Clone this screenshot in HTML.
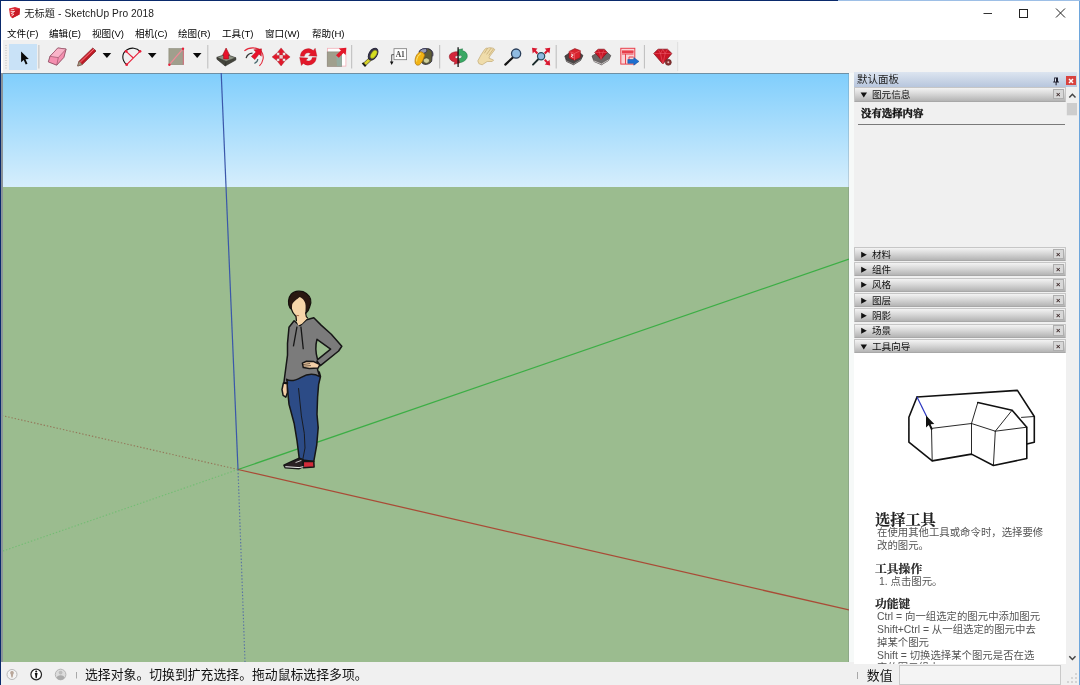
<!DOCTYPE html>
<html lang="zh-CN">
<head>
<meta charset="utf-8">
<title>无标题 - SketchUp Pro 2018</title>
<style>
*{box-sizing:border-box;margin:0;padding:0}
html,body{width:1080px;height:685px;overflow:hidden;background:#fff}
body{position:relative;will-change:transform;font-family:"Liberation Sans","Noto Sans CJK SC",sans-serif;color:#000}
.abs{position:absolute}
#topl{left:0;top:0;width:838px;height:1.3px;background:#0a2a6c}
#topr{left:838px;top:0;width:242px;height:1.3px;background:#9dbfe6}
#rightb{left:1078.6px;top:1px;width:1.4px;height:684px;background:#6ea6dc;z-index:5}
#leftb{left:0;top:1px;width:1.3px;height:684px;background:#0a2a6c}
#title{left:24.3px;top:6.5px;font-size:10.2px;line-height:14px;white-space:nowrap;color:#1c1c1c;letter-spacing:0.08px}
.menu{top:26.6px;font-size:9.6px;line-height:14px;white-space:nowrap}
#toolbar{left:2.8px;top:40.3px;width:1077px;height:32.7px;background:#f0f0f0}
#tbend{left:678px;top:40px;width:402px;height:33px;background:#f3f3f3}
#selbtn{left:9.4px;top:43.5px;width:27.4px;height:26.2px;background:#c9e2f7}
.sep{width:1px;background:#c4c4c4;top:45px;height:23px}
#vp{left:2px;top:73px;width:847px;height:589.4px}
#vpl{left:1px;top:73px;width:1.5px;height:589.4px;background:#8c949a;z-index:2}
#gap{left:848.6px;top:72.5px;width:5.4px;height:590px;background:#f6f9f8}
#panel{left:854px;top:73px;width:226px;height:589px;background:#f0f0f0}
#ptitle{left:854px;top:72.3px;width:223.4px;height:14.7px;background:linear-gradient(#dde5f0,#b7c6dd);font-size:10.5px;line-height:14px;padding-left:3px;color:#222}
.sec{left:854px;width:211.6px;height:14px;background:linear-gradient(#f3f3f3 0%,#d8d8d8 45%,#b4b4b4 100%);border:1px solid #c6c6c6;border-bottom-color:#a8a8a8;border-radius:1px;font-size:9.6px;line-height:12px;color:#111;white-space:nowrap}
.sec .tri{position:absolute;left:5px;top:2.5px}
.sec .lbl{position:absolute;left:17px;top:0.6px}
.sec .x{position:absolute;right:1px;top:0.8px;width:10.6px;height:10.4px;border:1px solid #aeaeae;background:#d8d8d8;font-size:7.5px;font-weight:bold;line-height:9px;text-align:center;color:#3a2626}
#info{left:854px;top:102px;width:212px;height:144px;background:#f0f0f0}
#instr{left:854px;top:352px;width:212.3px;height:312.3px;background:#fff;overflow:hidden}
#sbar{left:1066px;top:87px;width:14px;height:577px;background:#f0f0f0}
#status{left:1px;top:662.4px;width:853px;height:22.6px;background:#f0f0f0}
#status2{left:854px;top:664px;width:226px;height:21px;background:#f0f0f0}
.h{-webkit-text-stroke:0.2px #2a2a2a;position:absolute;font-family:"Liberation Serif","Noto Serif CJK SC",serif;font-weight:bold;color:#222;white-space:nowrap}
.t{position:absolute;font-size:10.4px;line-height:12.4px;color:#555;white-space:nowrap}
</style>
</head>
<body>
<div class="abs" id="topl"></div><div class="abs" id="topr"></div>
<div class="abs" id="leftb"></div>
<div class="abs" id="rightb"></div>

<!-- title bar -->
<svg class="abs" style="left:8px;top:6px" width="13" height="13" viewBox="8 6 13 13">
<path d="M9 8.400 L15 7.100 L19.900 8.600 L19.500 14.600 L12.200 18.300 L10.100 16 Z" fill="#dc2a34"/>
<path d="M15.300 10.200 L19.900 8.600 L19.500 14.600 L12.200 18.300 L13.200 13 Z" fill="#c81a26"/>
<path d="M10.800 9.800 L14.200 9.400 M10.600 11.600 L14.600 11.500 L11.200 13.600 L14 14.300 L11.600 15.800" fill="none" stroke="#fbdada" stroke-width="0.900"/>
</svg>
<div class="abs" id="title">无标题 - SketchUp Pro 2018</div>
<svg class="abs" style="left:975px;top:2.6px" width="100" height="20" viewBox="0 0 100 20">
<path d="M8.5 10.5 H17" stroke="#333" stroke-width="1" fill="none"/>
<rect x="44.5" y="6.500" width="8" height="8" stroke="#222" stroke-width="1" fill="none"/>
<path d="M81 5.500 L90 14.500 M90 5.500 L81 14.500" stroke="#222" stroke-width="1" fill="none"/>
</svg>

<!-- menu -->
<div class="abs menu" style="left:7px">文件(F)</div>
<div class="abs menu" style="left:49px">编辑(E)</div>
<div class="abs menu" style="left:92px">视图(V)</div>
<div class="abs menu" style="left:135px">相机(C)</div>
<div class="abs menu" style="left:178px">绘图(R)</div>
<div class="abs menu" style="left:222px">工具(T)</div>
<div class="abs menu" style="left:265px">窗口(W)</div>
<div class="abs menu" style="left:312px">帮助(H)</div>

<!-- toolbar -->
<div class="abs" id="toolbar"></div>
<div class="abs" id="tbend"></div>
<div class="abs" id="selbtn"></div>
<!--TOOLBAR-ICONS-->
<svg class="abs" style="left:1px;top:40px" width="700" height="33" viewBox="1 40 700 33">
<path d="M6 45 V69" stroke="#b9b9b9" stroke-width="1" stroke-dasharray="1 1.500"/>
<path d="M38.9 45 V68.500" stroke="#bcbcbc" stroke-width="1"/>
<path d="M207.8 45 V68.500" stroke="#bcbcbc" stroke-width="1"/>
<path d="M351.7 45 V68.500" stroke="#bcbcbc" stroke-width="1"/>
<path d="M439.7 45 V68.500" stroke="#bcbcbc" stroke-width="1"/>
<path d="M556.2 45 V68.500" stroke="#bcbcbc" stroke-width="1"/>
<path d="M644.4 45 V68.500" stroke="#bcbcbc" stroke-width="1"/>
<path d="M677.700 42 V71" stroke="#dedede" stroke-width="1"/>
<path d="M21.100 51.500 L21.100 62.300 L23.700 60 L25.700 64.600 L27.500 63.800 L25.500 59.300 L28.800 59.100 Z" fill="#0a0a0a"/>
<path d="M57.800 48 L66.100 49.100 L63.900 57.400 L56.700 65.200 L48.300 61.900 L50 56.300 Z" fill="#f58fb0" stroke="#8d4c60" stroke-width="0.900" stroke-linejoin="round"/>
<path d="M57.800 48 L66.100 49.100 L58.300 57.600 L50 56.300 Z" fill="#f9b4c9" stroke="#8d4c60" stroke-width="0.600" stroke-linejoin="round"/>
<path d="M58.300 57.600 L56.700 65.200" stroke="#8d4c60" stroke-width="0.600"/>
<path d="M77.700 66 L79 61.300 L92.800 48 L96 51 L82.300 64.500 Z" fill="#cf1f2b" stroke="#7a1a20" stroke-width="0.700" stroke-linejoin="round"/>
<path d="M77.700 66 L79 61.300 L82.300 64.500 Z" fill="#a09a80" stroke="#6a6450" stroke-width="0.500"/>
<path d="M80.200 62.200 L94 49" stroke="#f0808a" stroke-width="0.900"/>
<path d="M81.600 63.600 L95.300 50.300" stroke="#9a1820" stroke-width="0.700"/>
<path d="M102.6 53 h8.600 l-4.300 5 Z" fill="#0a0a0a"/>
<path d="M147.9 53 h8.600 l-4.300 5 Z" fill="#0a0a0a"/>
<path d="M192.9 53 h8.600 l-4.300 5 Z" fill="#0a0a0a"/>
<path d="M126.700 64.700 C121.500 60 121.500 53.500 126.700 50 C131 47 137 47.800 140 51.300" fill="none" stroke="#111" stroke-width="1.100"/>
<path d="M126.700 64.700 L140 51.300 M126.100 51.300 L133.300 58" stroke="#e8203a" stroke-width="1.100" fill="none"/>
<circle cx="126.7" cy="64.7" r="1.400" fill="#e8203a"/>
<circle cx="140.0" cy="51.3" r="1.400" fill="#e8203a"/>
<circle cx="126.1" cy="51.3" r="1.400" fill="#e8203a"/>
<rect x="168.900" y="48.600" width="14.400" height="16.100" fill="#a09f8d" stroke="#8a8a7a" stroke-width="0.600"/>
<path d="M169.300 64.700 L183 48.800" stroke="#f08a98" stroke-width="1.200"/>
<path d="M183.300 48.600 V64.700" stroke="#e8506a" stroke-width="0.700"/>
<circle cx="169.400" cy="64.700" r="1.200" fill="#e8203a"/><circle cx="183" cy="48.800" r="1.200" fill="#e8203a"/>
<path d="M216.900 57.300 L216.900 59.200 L225.200 66 L235.800 60 L235.800 57.800 L226.100 61.200 Z" fill="#45453c" stroke="#2a2a26" stroke-width="0.600" stroke-linejoin="round"/>
<path d="M216.900 57.300 L226.100 54.300 L235.800 57.800 L226.100 61.400 Z" fill="#8e9484" stroke="#3a3a34" stroke-width="0.700" stroke-linejoin="round"/>
<path d="M226.100 61.400 L225.200 66" stroke="#2a2a26" stroke-width="0.600"/>
<path d="M226.100 48 L229.500 55 L228.600 55 L228.600 58.900 L223.600 58.900 L223.600 55 L222.700 55 Z" fill="#e8122a" stroke="#9a1018" stroke-width="0.600" stroke-linejoin="round"/>
<path d="M244.400 50.900 C249 46.800 257.500 46.500 261.700 52 C264.500 56 263.300 62 259.400 65.900" fill="none" stroke="#e3283a" stroke-width="1.100"/>
<path d="M246.100 58.100 C247 55 249.500 53.200 252.500 53.100" fill="none" stroke="#333" stroke-width="1.200"/>
<path d="M254.400 63.400 C256.500 62.500 257.800 61 257.800 59" fill="none" stroke="#4a6a70" stroke-width="1.200"/>
<path d="M261.500 48.800 L261.300 56.200 L259 54.200 L254.800 59.600 L251.300 56.400 L256 52 L253.800 49.800 Z" fill="#e8122a" stroke="#9a1018" stroke-width="0.400"/>
<path transform="rotate(0 281.1 56.9)" d="M281.1 47.9 l3.700 4.600 h-2.200 v2.600 h-3 v-2.600 h-2.200 Z" fill="#e3182a" stroke="#a01420" stroke-width="0.400"/>
<path transform="rotate(90 281.1 56.9)" d="M281.1 47.9 l3.700 4.600 h-2.200 v2.600 h-3 v-2.600 h-2.200 Z" fill="#e3182a" stroke="#a01420" stroke-width="0.400"/>
<path transform="rotate(180 281.1 56.9)" d="M281.1 47.9 l3.700 4.600 h-2.200 v2.600 h-3 v-2.600 h-2.200 Z" fill="#e3182a" stroke="#a01420" stroke-width="0.400"/>
<path transform="rotate(270 281.1 56.9)" d="M281.1 47.9 l3.700 4.600 h-2.200 v2.600 h-3 v-2.600 h-2.200 Z" fill="#e3182a" stroke="#a01420" stroke-width="0.400"/>
<circle cx="281.1" cy="56.9" r="1.300" fill="#f4c8c8"/>
<path d="M300.300 56.300 A8 8 0 0 1 313.300 50.400 L315.200 48.200 L317 56.300 L308.600 55.800 L310.600 53.500 A4 4 0 0 0 304.300 56.300 Z" fill="#e3182a" stroke="#a01420" stroke-width="0.300"/>
<path d="M316.300 57.500 A8 8 0 0 1 303.300 63.400 L301.400 65.600 L299.600 57.500 L308 58 L306 60.300 A4 4 0 0 0 312.300 57.500 Z" fill="#e3182a" stroke="#a01420" stroke-width="0.300"/>
<rect x="327.500" y="48.300" width="18.400" height="17.800" fill="#fff" stroke="#f3b0b8" stroke-width="0.800"/>
<rect x="327.200" y="51.900" width="14.500" height="14.400" fill="#a09f8d" stroke="#85857a" stroke-width="0.600"/>
<path d="M336.300 56 L341.700 56 L341.700 66.300 L337 66.300 Z" fill="#8fb0a8" opacity="0.700"/>
<path d="M346.300 47.800 L345.700 55 L343.400 52.900 L338.800 57.800 L336 55.200 L340.900 50.500 L338.800 48.500 Z" fill="#e3182a"/>
<path d="M363 63.600 L369.600 57.400 L371.800 59.800 L365.200 66 Z" fill="#d8d428" stroke="#3a3a20" stroke-width="0.700" stroke-linejoin="round"/>
<path d="M362.500 62.900 L365.700 66.300" stroke="#1e1e18" stroke-width="2"/>
<ellipse cx="373.100" cy="54.100" rx="4" ry="6.500" transform="rotate(33 373.100 54.100)" fill="#3a3848" stroke="#26243a" stroke-width="1"/>
<ellipse cx="373.700" cy="54.300" rx="2.500" ry="4.600" transform="rotate(33 373.700 54.300)" fill="#d4de22" stroke="#7a7a28" stroke-width="0.500"/>
<rect x="394" y="48.700" width="12.600" height="11" fill="#fff" stroke="#7a7a7a" stroke-width="0.800"/>
<text x="400.300" y="57.200" font-family="Liberation Serif,serif" font-weight="bold" font-size="7.500" text-anchor="middle" fill="#444">A1</text>
<path d="M394 54.700 H391.700 V62" stroke="#333" stroke-width="0.800" fill="none"/>
<path d="M389.900 61.500 h3.600 l-1.800 3.600 Z" fill="#111"/>
<path d="M419.200 51.600 L421.700 62.500 C423 64.600 426 65 428.500 63.800 C430.800 62.800 432 61.500 431.800 60 L432.300 53 C431.500 50 429.500 48.600 427.300 48.500 C423.500 48.300 420.300 49.500 419.200 51.600 Z" fill="#5f5d36" stroke="#26243a" stroke-width="0.800" stroke-linejoin="round"/>
<ellipse cx="426.400" cy="60.600" rx="3.100" ry="2.700" fill="#cfd09c" stroke="#3a3a2a" stroke-width="0.600"/>
<path d="M428.600 49.300 C431.800 49.300 433.600 52.500 432.700 56.300" fill="none" stroke="#26243a" stroke-width="0.900"/>
<ellipse cx="423.200" cy="51.100" rx="3.900" ry="2.300" transform="rotate(-18 423.200 51.100)" fill="#969cb2" stroke="#26244a" stroke-width="0.700"/>
<path d="M420.300 51.800 C416.600 53.500 414.700 58 415.100 62 C415.400 64.900 417.500 65.900 419.500 64.700 C422 63.100 423.600 59 424.600 55.300 C424.300 53.300 422.500 51.800 420.300 51.800 Z" fill="#f2b414" stroke="#a8700c" stroke-width="0.700" stroke-linejoin="round"/>
<path d="M416.600 61.500 C416.500 58 418.200 55 421 53.600" fill="none" stroke="#fbe27a" stroke-width="1"/>
<path d="M458.100 49.800 L462.600 48.800 L462.200 50.600 C465.500 51.300 467.500 53.500 467.300 56.200 C467.100 59.500 464 62 459.300 62.700 L459.300 58.600 C461 58.300 461.800 57.600 461.800 56.600 C461.800 55.700 461.200 55.200 460.300 54.900 L460 56.300 L458.100 53.600 Z" fill="#3aa864" stroke="#1f7040" stroke-width="0.500" stroke-linejoin="round"/>
<path d="M458.100 51.800 C452 51.500 449 54 449.300 57.200 C449.600 59.800 452 61.400 454.800 62.100 L454.200 64.300 L459.800 62.800 L458.100 57.400 L456.800 58.600 C455.600 58.200 455 57.600 455 56.900 C455 56.200 456.200 55.800 458.100 55.800 Z" fill="#d4263a" stroke="#8a1420" stroke-width="0.500" stroke-linejoin="round"/>
<path d="M458.100 47.300 V67" stroke="#141414" stroke-width="1.300"/>
<path d="M477.800 60.900 L481.100 54.800 L484.400 49.800 C485.500 48.300 486.500 47.900 487.600 48.200 C489 47.600 490.200 47.500 491.300 47.900 C493 47.900 494.300 48.600 494.700 49.800 L490 55.900 L488.900 58.100 L493.600 60.100 L492.200 61.500 L487.200 61.500 L482.200 64.800 L478.900 63.700 Z" fill="#efdcaa" stroke="#c2a972" stroke-width="0.700" stroke-linejoin="round"/>
<path d="M487.600 48.200 L484.300 53.300 M491.300 47.900 L486.600 54.400 M493.600 48.700 L488.800 55.400" fill="none" stroke="#b89c68" stroke-width="0.600"/>
<path d="M512.600 57.800 L505.300 64.600" stroke="#151515" stroke-width="2.200" stroke-linecap="round"/>
<circle cx="516.100" cy="53.600" r="4.600" fill="#8fbbe2" stroke="#2a3f5a" stroke-width="1.300"/>
<path d="M538.500 59 L533 64.600" stroke="#1a2a2a" stroke-width="1.900" stroke-linecap="round"/>
<circle cx="541.100" cy="56.300" r="3.600" fill="#8fbbe2" stroke="#2a4a5a" stroke-width="1.200"/>
<path d="M532 47.800 L537.500 48.600 L535.800 50.300 L538.200 52.700 L536.700 54.200 L534.300 51.800 L532.700 53.400 Z" fill="#d81830"/>
<path d="M550.200 47.800 L544.700 48.600 L546.400 50.300 L544 52.700 L545.500 54.200 L547.900 51.800 L549.500 53.400 Z" fill="#d81830"/>
<path d="M550.200 65.400 L544.700 64.600 L546.400 62.900 L544 60.500 L545.500 59 L547.900 61.400 L549.500 59.800 Z" fill="#d81830"/>
<path d="M564.800 56 L570 52.500 L579 52 L583 55.500 L580.500 60.500 L573.500 64.800 L566.500 61.500 Z" fill="#4a4646" stroke="#2a2626" stroke-width="0.600" stroke-linejoin="round"/>
<path d="M566 60.800 L573.500 64 L580.800 59.800" fill="none" stroke="#9a9494" stroke-width="0.800"/>
<path d="M569 51.500 L574.800 48.600 L580.300 50.600 L580.300 57.500 L574.500 60.300 L569 58 Z" fill="#d8232e" stroke="#8a1018" stroke-width="0.600" stroke-linejoin="round"/>
<path d="M569 51.500 L574.500 53.500 L580.300 50.600 M574.500 53.500 L574.500 60.300" fill="none" stroke="#f07a80" stroke-width="0.500"/>
<path d="M571 54 L573.300 55 L571 56.300 L573.300 57.500" fill="none" stroke="#fff" stroke-width="0.800"/>
<path d="M592 56 L598 52.500 L607 52.300 L610.800 55.500 L608.500 60.500 L601.500 64.800 L594 61.500 Z" fill="#6a6666" stroke="#3a3636" stroke-width="0.600" stroke-linejoin="round"/>
<path d="M593.500 60.800 L601.500 64 L608.800 59.800" fill="none" stroke="#d0cccc" stroke-width="0.900"/>
<path d="M594.700 52.500 L598 49.200 L604.500 49.200 L607.300 52.500 L601 59.500 Z" fill="#c81424" stroke="#7a0c14" stroke-width="0.600" stroke-linejoin="round"/>
<path d="M594.700 52.500 H607.300 M598 49.200 L599.500 52.500 L601 59.500 L602.800 52.500 L604.500 49.200" fill="none" stroke="#f06a74" stroke-width="0.450"/>
<rect x="620.800" y="48.300" width="14" height="15.800" fill="#f9d5d8" stroke="#e8404c" stroke-width="1"/>
<path d="M622 51 H633.500 M622 54 H633.500 M625.500 54 V64 M629 57 H633.500 M629 57 V61" stroke="#e8404c" stroke-width="1" fill="none"/>
<rect x="622" y="50.800" width="11.500" height="2.300" fill="#e8404c"/>
<path d="M627.800 59.500 H633.800 V57.600 L639 61.400 L633.800 65.200 V63.300 H627.800 Z" fill="#1e6fd0" stroke="#0e4a98" stroke-width="0.500"/>
<path d="M653.700 53.500 L658 49.200 L667.500 49.200 L671.900 53.500 L662.800 64 Z" fill="#c81424" stroke="#7a0c14" stroke-width="0.700" stroke-linejoin="round"/>
<path d="M653.700 53.500 H671.900 M658 49.200 L660.500 53.500 L662.800 64 L665.200 53.500 L667.500 49.200 M660.500 53.500 L662.800 49.200 L665.200 53.500" fill="none" stroke="#f06070" stroke-width="0.500"/>
<circle cx="668.300" cy="62.300" r="3" fill="#8a3030" stroke="#5a2020" stroke-width="0.600"/><circle cx="668.300" cy="62.300" r="1" fill="#e8c0c0"/>
</svg>
<!--/TOOLBAR-ICONS-->

<!-- viewport -->
<div class="abs" id="vpl"></div>
<svg class="abs" id="vp" viewBox="2 73 847 589.4" width="847" height="589.4">
<defs>
<linearGradient id="sky" x1="0" y1="0" x2="0" y2="1">
<stop offset="0" stop-color="#80cefc"/>
<stop offset="1" stop-color="#d6eefc"/>
</linearGradient>
</defs>
<rect x="2" y="73" width="847" height="114" fill="url(#sky)"/>
<rect x="2" y="187" width="847" height="476" fill="#9bbc8f"/>
<rect x="2" y="72.700" width="847" height="1.200" fill="#6c8a9b"/>
<!--SCENE-->
<path d="M238 469.5 L3 415.8" stroke="#94785a" stroke-width="1.15" stroke-dasharray="1.4 1.9" fill="none"/>
<path d="M238 469.5 L3 551" stroke="#74bd74" stroke-width="1.15" stroke-dasharray="1.4 1.9" fill="none"/>
<path d="M238 469.5 L245 662" stroke="#5872a4" stroke-width="1.15" stroke-dasharray="1.4 1.9" fill="none"/>
<path d="M238 469.5 L849 259.2" stroke="#3cae45" stroke-width="1.25" fill="none"/>
<path d="M238 469.5 L849 610" stroke="#a94b36" stroke-width="1.25" fill="none"/>
<path d="M221.2 73 L238 469.5" stroke="#3a57aa" stroke-width="1.2" fill="none"/>
<path d="M 286.4 378.6 L 289.0 404.2 L 294.1 423.2 L 297.0 440.7 L 299.2 458.2 L 302.8 460.0 L 313.8 461.4 L 316.7 445.1 L 318.2 427.6 L 317.0 414.4 L 317.6 396.9 L 318.6 384.6 L 320.5 376.5 L 319.3 372.1 L 287.5 372.1 Z" fill="#2c4b86" stroke="#161616" stroke-width="1.5" stroke-linejoin="round"/>
<path d="M 298.5 388.1 L 301.4 415.9 L 304.3 433.4 L 305.0 448.0 L 302.8 459.4" fill="none" stroke="#161616" stroke-width="0.9"/>
<path d="M 283.9 465.2 L 291.9 461.4 L 299.2 458.2 L 303.3 460.0 L 303.3 466.7 L 299.2 468.7 L 285.3 467.8 Z" fill="#2a2024" stroke="#161616" stroke-width="1.5" stroke-linejoin="round"/>
<path d="M 303.3 461.4 L 313.8 461.4 L 314.1 467.0 L 303.3 467.8 Z" fill="#d22c3a" stroke="#161616" stroke-width="1.5" stroke-linejoin="round"/>
<path d="M 285.3 466.7 L 299.2 467.6 L 303.3 466.7" fill="none" stroke="#f2f2f2" stroke-width="1"/>
<path d="M 295.5 462.6 L 301.4 460.4" fill="none" stroke="#e8e8e8" stroke-width="0.8"/>
<path d="M 283.4 383.0 L 282.0 389.6 L 283.1 395.4 L 285.8 397.2 L 287.5 392.5 L 287.2 383.8 Z" fill="#f3cfa6" stroke="#161616" stroke-width="1.5" stroke-linejoin="round"/>
<path d="M 294.1 320.8 L 289.0 327.3 L 287.5 343.4 L 287.5 355.1 L 283.9 382.5 L 287.5 383.1 L 286.6 379.3 C 290.4 381.9 294.8 380.8 301.2 377.3 C 306.5 374.3 313.8 373.2 319.8 376.7 L 317.6 369.7 L 317.0 360.9 L 320.4 365.6 L 338.6 351.0 L 341.8 346.3 L 331.3 334.3 L 321.1 325.1 L 313.8 317.8 L 306.5 319.7 L 299.9 325.6 Z" fill="#7b7b7b" stroke="#161616" stroke-width="1.5" stroke-linejoin="round"/>
<path d="M 317.0 339.3 L 330.6 349.2 L 317.6 359.7 C 315.3 352.2 315.5 344.9 317.0 339.3 Z" fill="#9bbc8f" stroke="#161616" stroke-width="1.5" stroke-linejoin="round"/>
<path d="M 297.0 326.6 L 293.4 346.3 M 300.9 326.6 L 303.3 349.2" fill="none" stroke="#161616" stroke-width="1.3"/>
<path d="M 302.4 363.1 L 306.5 361.2 L 313.8 361.6 L 319.9 364.6 L 318.2 367.9 L 309.4 368.5 L 303.3 367.5 Z" fill="#f3cfa6" stroke="#161616" stroke-width="1.5" stroke-linejoin="round"/>
<path d="M 303.0 364.6 L 310.1 363.5 M 303.3 366.2 L 310.9 365.6" fill="none" stroke="#3a2a20" stroke-width="0.7"/>
<path d="M 295.4 315.6 L 296.3 320.5 L 298.3 325.4 L 302.0 323.8 L 307.5 318.0 L 306.1 316.5 L 305.5 312.3 Z" fill="#f6d5a8"/>
<path d="M 290.0 307.9 C 287.8 304.1 287.8 298.1 291.2 294.2 C 294.5 290.5 302.0 290.1 306.4 293.5 C 311.0 297.0 311.7 302.2 309.7 306.8 C 309.0 309.4 307.7 311.4 306.0 313.1 L 305.0 304.7 L 299.7 297.2 L 293.1 303.4 L 292.2 309.4 Z" fill="#2a1811" stroke="#14100c" stroke-width="1.2" stroke-linejoin="round"/>
<path d="M 292.1 304.7 C 293.1 302.0 297.2 299.1 299.7 297.1 C 302.5 298.1 305.4 301.4 305.6 305.4 C 305.7 308.7 305.6 311.3 305.0 313.4 C 303.7 315.4 301.0 316.7 298.4 316.1 C 295.8 315.6 293.1 312.6 291.9 308.8 Z" fill="#f6d5a8"/>
<path d="M 290.9 308.1 C 292.0 311.4 293.9 314.7 296.0 316.5 L 296.4 320.5" fill="none" stroke="#14100c" stroke-width="1.3" stroke-linecap="round"/>
<path d="M 305.6 312.9 L 306.3 316.7 L 307.6 317.9" fill="none" stroke="#14100c" stroke-width="1.1" stroke-linecap="round"/>
<path d="M 296.2 315.4 L 299.1 315.7" fill="none" stroke="#9a5a3a" stroke-width="0.8"/>
<!--/SCENE-->
</svg>
<div class="abs" id="gap"></div>
<div class="abs" style="left:847.7px;top:74px;width:1px;height:588.4px;background:rgba(90,100,110,0.22)"></div>

<!-- right panel -->
<div class="abs" id="panel"></div>
<div class="abs" id="ptitle">默认面板</div>
<div class="abs" id="sbar"></div>
<div class="abs" id="info"></div>
<div class="abs" id="instr">
<!--INSTR-->
<svg style="position:absolute;left:0;top:0" width="212" height="130" viewBox="854 352 212 130">
<g fill="none" stroke="#111" stroke-linejoin="round" stroke-linecap="round">
<path d="M917 397 L1017.4 390.4 L1034.3 416.5 L1034.3 442.2 L1026.8 444" stroke-width="1.6"/>
<path d="M917 397 L908.9 417.2 L908.9 442.2 L932.2 460.9 L971.5 454.1 L993.4 465.5 L1026.8 458.5 L1026.8 427.2 L1012.1 410.2 L977.8 402.5" stroke-width="1.6"/>
<path d="M931.5 428.4 L932.2 460.9 M931.5 428.4 L971.5 423.5 L971.5 454.1 M971.5 423.5 L977.8 402.5 M971.5 423.5 L995.3 431.2 L993.4 465.5 M995.3 431.2 L1026.8 427.2 M995.3 431.2 L1012.1 410.2 M1021.5 417.4 L1034.3 416.5 M926.4 416 L931.5 428.4" stroke-width="0.9"/>
</g>
<path d="M917 397 L926.4 416" stroke="#2a35c0" stroke-width="1.2" fill="none"/>
<path d="M926 415.5 L926 427.5 L928.8 425 L931 430 L932.8 429.2 L930.6 424.3 L934.3 424 Z" fill="#111"/>
</svg>
<div class="h" style="left:21.0px;top:159.6px;font-size:15.2px;line-height:15.2px">选择工具</div>
<div class="t" style="left:23.0px;top:174.7px">在使用其他工具或命令时，选择要修</div>
<div class="t" style="left:23.0px;top:187.8px">改的图元。</div>
<div class="h" style="left:21.0px;top:211.6px;font-size:11.8px;line-height:11.8px">工具操作</div>
<div class="t" style="left:25.0px;top:223.6px">1. 点击图元。</div>
<div class="h" style="left:21.0px;top:246.9px;font-size:11.8px;line-height:11.8px">功能键</div>
<div class="t" style="left:23.0px;top:259.3px">Ctrl = 向一组选定的图元中添加图元</div>
<div class="t" style="left:23.0px;top:272.4px">Shift+Ctrl = 从一组选定的图元中去</div>
<div class="t" style="left:23.0px;top:284.8px">掉某个图元</div>
<div class="t" style="left:23.0px;top:297.7px">Shift = 切换选择某个图元是否在选</div>
<div class="t" style="left:23.0px;top:310.4px">定的图元组中</div>
<!--/INSTR-->
</div>
<!--SECTIONS-->
<div class="abs sec" style="height:14.7px;top:87.3px"><svg class="tri" width="8" height="8" viewBox="0 0 8 8"><path d="M0.6 1.6 H7 L3.8 6.4Z" fill="#111"/></svg><span class="lbl">图元信息</span><span class="x">×</span></div>
<div class="abs sec" style="top:247.0px"><svg class="tri" width="8" height="8" viewBox="0 0 8 8"><path d="M1.2 0.8 L6.8 3.8 L1.2 6.800Z" fill="#111"/></svg><span class="lbl">材料</span><span class="x">×</span></div>
<div class="abs sec" style="top:262.3px"><svg class="tri" width="8" height="8" viewBox="0 0 8 8"><path d="M1.2 0.8 L6.8 3.8 L1.2 6.800Z" fill="#111"/></svg><span class="lbl">组件</span><span class="x">×</span></div>
<div class="abs sec" style="top:277.7px"><svg class="tri" width="8" height="8" viewBox="0 0 8 8"><path d="M1.2 0.8 L6.8 3.8 L1.2 6.800Z" fill="#111"/></svg><span class="lbl">风格</span><span class="x">×</span></div>
<div class="abs sec" style="top:293.0px"><svg class="tri" width="8" height="8" viewBox="0 0 8 8"><path d="M1.2 0.8 L6.8 3.8 L1.2 6.800Z" fill="#111"/></svg><span class="lbl">图层</span><span class="x">×</span></div>
<div class="abs sec" style="top:308.3px"><svg class="tri" width="8" height="8" viewBox="0 0 8 8"><path d="M1.2 0.8 L6.8 3.8 L1.2 6.800Z" fill="#111"/></svg><span class="lbl">阴影</span><span class="x">×</span></div>
<div class="abs sec" style="top:323.7px"><svg class="tri" width="8" height="8" viewBox="0 0 8 8"><path d="M1.2 0.8 L6.8 3.8 L1.2 6.800Z" fill="#111"/></svg><span class="lbl">场景</span><span class="x">×</span></div>
<div class="abs sec" style="top:339.0px"><svg class="tri" width="8" height="8" viewBox="0 0 8 8"><path d="M0.6 1.6 H7 L3.8 6.4Z" fill="#111"/></svg><span class="lbl">工具向导</span><span class="x">×</span></div>
<div class="abs" style="left:861px;top:106.9px;font-family:Liberation Serif,Noto Serif CJK SC,serif;font-size:10.4px;line-height:14px;font-weight:bold;-webkit-text-stroke:0.4px #111;color:#111;white-space:nowrap">没有选择内容</div>
<div class="abs" style="left:858px;top:124px;width:207px;height:1px;background:#7a7a7a"></div>
<svg class="abs" style="left:1051px;top:75.500px" width="10" height="11" viewBox="0 0 10 11"><path d="M3.200 1.600 H7 V5.600 H8 V6.600 H5.600 V9.300 H4.600 V6.600 H2.200 V5.600 H3.200 Z" fill="#1a1a2a"/><rect x="4" y="2.400" width="1" height="3.200" fill="#dfe6f2"/></svg>
<div class="abs" style="left:1066.3px;top:76px;width:9.800px;height:9.200px;background:#d8423e"></div>
<svg class="abs" style="left:1066.3px;top:75.600px" width="10" height="10" viewBox="0 0 10 10"><path d="M3 3 L7 7 M7 3 L3 7" stroke="#fff" stroke-width="1.500"/></svg>
<svg class="abs" style="left:1066px;top:87px" width="13" height="577" viewBox="0 0 13 577"><path d="M3.300 10.500 L6.400 7.300 L9.500 10.500" stroke="#444" stroke-width="1.500" fill="none"/><rect x="0.800" y="16" width="10.200" height="12.300" fill="#cdcdcd"/><path d="M3.300 569.300 L6.400 572.500 L9.500 569.300" stroke="#444" stroke-width="1.500" fill="none"/></svg>
<!--/SECTIONS-->

<!-- status bar -->
<div class="abs" id="status"></div><div class="abs" id="status2"></div>
<!--STATUS-->
<svg class="abs" style="left:1px;top:663px" width="90" height="22" viewBox="1 663 90 22">
<circle cx="12" cy="674.500" r="5" fill="#f4f4f4" stroke="#b8b8b8" stroke-width="1"/>
<path d="M12 671 a1.800 1.800 0 0 1 1.200 3.200 L12.600 677.500 h-1.200 L10.800 674.200 A1.800 1.800 0 0 1 12 671Z" fill="#b9a79a"/>
<circle cx="36.200" cy="674.500" r="5.300" fill="#fff" stroke="#222" stroke-width="1.200"/>
<circle cx="36.200" cy="671.600" r="1" fill="#111"/><path d="M34.800 673 h2.800 l-0.500 2.500 l-0.300 2.800 h-1.200 l-0.300 -2.800Z" fill="#111"/>
<circle cx="60.600" cy="674.500" r="5.300" fill="#dcdcdc" stroke="#b5b5b5" stroke-width="1"/>
<circle cx="60.600" cy="672.600" r="1.900" fill="#bdbdbd"/><path d="M56.500 678 a4.200 3.500 0 0 1 8.200 0 a5.300 5.300 0 0 1 -8.200 0Z" fill="#ababab"/>
<path d="M76.500 672 V678.500" stroke="#a8a8a8" stroke-width="1"/>
</svg>
<div class="abs" style="left:85px;top:667px;font-size:12.85px;line-height:16px;color:#111;white-space:nowrap">选择对象。切换到扩充选择。拖动鼠标选择多项。</div>
<div class="abs" style="left:857px;top:672px;width:1px;height:7px;background:#a8a8a8"></div>
<div class="abs" style="left:866.8px;top:668px;font-size:12.9px;line-height:16px;color:#111;white-space:nowrap">数值</div>
<div class="abs" style="left:899.4px;top:665px;width:161.6px;height:20px;background:#f4f4f4;border:1px solid #c9c9c9"></div>
<svg class="abs" style="left:1066px;top:672px" width="12" height="12" viewBox="0 0 12 12"><g fill="#d4d4d4"><rect x="9" y="9" width="2" height="2"/><rect x="9" y="5" width="2" height="2"/><rect x="5" y="9" width="2" height="2"/><rect x="9" y="1" width="2" height="2"/><rect x="5" y="5" width="2" height="2"/><rect x="1" y="9" width="2" height="2"/></g></svg>
<!--/STATUS-->
</body>
</html>
